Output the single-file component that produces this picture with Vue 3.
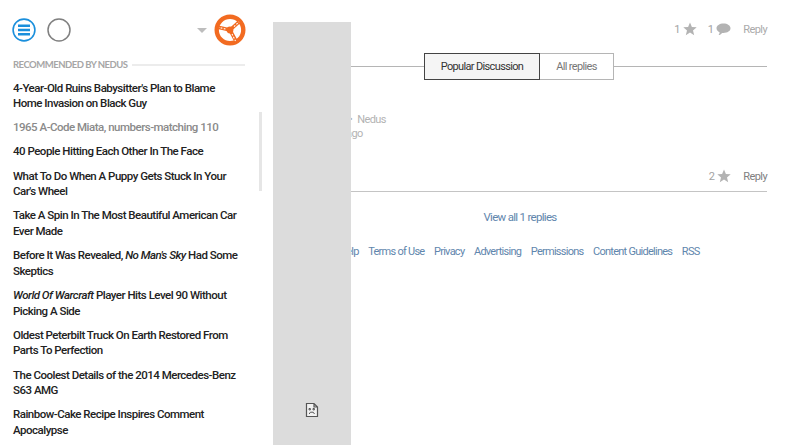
<script setup>
const items = [
  { parts: [{ t: "4-Year-Old Ruins Babysitter's Plan to Blame Home Invasion on Black Guy" }] },
  { parts: [{ t: '1965 A-Code Miata, numbers-matching 110' }], visited: true },
  { parts: [{ t: '40 People Hitting Each Other In The Face' }] },
  { parts: [{ t: "What To Do When A Puppy Gets Stuck In Your Car's Wheel" }] },
  { parts: [{ t: 'Take A Spin In The Most Beautiful American Car Ever Made' }] },
  { parts: [{ t: 'Before It Was Revealed, ' }, { t: "No Man's Sky", i: true }, { t: ' Had Some Skeptics' }] },
  { parts: [{ t: 'World Of Warcraft', i: true }, { t: ' Player Hits Level 90 Without Picking A Side' }] },
  { parts: [{ t: 'Oldest Peterbilt Truck On Earth Restored From Parts To Perfection' }] },
  { parts: [{ t: 'The Coolest Details of the 2014 Mercedes-Benz S63 AMG' }] },
  { parts: [{ t: 'Rainbow-Cake Recipe Inspires Comment Apocalypse' }] }
]
const footer = ['Help', 'Terms of Use', 'Privacy', 'Advertising', 'Permissions', 'Content Guidelines', 'RSS']
const star = 'M7 0.5 L8.9 5 L13.7 5.3 L10 8.4 L11.2 13.2 L7 10.6 L2.8 13.2 L4 8.4 L0.3 5.3 L5.1 5 Z'
</script>

<template>
  <div class="page">
    <aside class="sidebar">
      <header class="top">
        <svg class="ico" width="24" height="24" viewBox="0 0 24 24">
          <circle cx="12" cy="12" r="10.9" fill="none" stroke="#1a8fdc" stroke-width="1.6" />
          <path d="M6 7.8h12M6 12h12M6 16.2h12" stroke="#1a8fdc" stroke-width="2.4" />
        </svg>
        <svg class="ico" width="24" height="24" viewBox="0 0 24 24">
          <circle cx="12" cy="12" r="11" fill="#fff" stroke="#808080" stroke-width="1.5" />
        </svg>
        <span class="caret"></span>
        <svg class="wheel" width="32" height="32" viewBox="0 0 32 32">
          <circle cx="16" cy="16" r="13.3" fill="#fff" stroke="#f26b21" stroke-width="4.4" />
          <path d="M16 16L26 7M16 16L3 13M16 16L22.5 28" stroke="#f26b21" stroke-width="3.6" />
          <circle cx="16" cy="16" r="3.4" fill="#f26b21" />
          <path d="M20 12.6L25 8M11.5 15L5 13.5M18 20L21.5 27" stroke="#fff" stroke-width="1.1" stroke-dasharray="1.8 1.4" />
        </svg>
      </header>
      <div class="rec">
        <span>RECOMMENDED BY NEDUS</span>
        <i class="rec-line"></i>
      </div>
      <ul class="list">
        <li v-for="(item, n) in items" :key="n" :class="{ visited: item.visited }">
          <template v-for="(p, k) in item.parts" :key="k">
            <em v-if="p.i">{{ p.t }}</em>
            <template v-else>{{ p.t }}</template>
          </template>
        </li>
      </ul>
      <div class="thumb"></div>
    </aside>

    <main class="main">
      <div class="stats">
        <span>1</span>
        <svg width="14" height="14" viewBox="0 0 14 14"><path :d="star" fill="#b3b3b3" /></svg>
        <span class="count2">1</span>
        <svg width="15" height="13" viewBox="0 0 15 13"><path d="M7.5 0.5C11.4 0.5 14.5 2.6 14.5 5.3S11.4 10 7.5 10C7 10 6.6 10 6.1 9.9C5.2 11 3.9 11.8 2.6 12.1C3.2 11.3 3.6 10.4 3.6 9.3C1.7 8.5 0.5 7 0.5 5.3C0.5 2.6 3.6 0.5 7.5 0.5Z" fill="#b3b3b3" /></svg>
        <a class="reply light">Reply</a>
      </div>
      <div class="tabs">
        <i class="rule"></i>
        <button class="tab active">Popular Discussion</button>
        <button class="tab">All replies</button>
        <i class="rule end"></i>
      </div>
      <div class="meta">
        <span class="author">• <b>Nedus</b></span>
        <span class="ago">ago</span>
      </div>
      <div class="stats second">
        <span>2</span>
        <svg width="14" height="14" viewBox="0 0 14 14"><path :d="star" fill="#b3b3b3" /></svg>
        <a class="reply">Reply</a>
      </div>
      <a class="viewall">View all 1 replies</a>
      <nav class="foot">
        <a v-for="f in footer" :key="f">{{ f }}</a>
      </nav>
    </main>

    <div class="ghost">
      <svg width="14" height="16" viewBox="0 0 14 16">
        <path d="M1.5 1.5H9L12.5 5V14.5H1.5Z M9 1.5V5H12.5" fill="#f2f2f2" stroke="#555" stroke-width="1.2" />
        <path d="M4 6.5h1.4v1.4H4zM8 6.5h1.4v1.4H8zM4.2 12l1.2-1.8h2.8L9.5 12" fill="none" stroke="#555" stroke-width="1" />
      </svg>
    </div>
  </div>
</template>

<style>
html, body { margin: 0; background: #fff; overflow: hidden; }
</style>

<style scoped>
.page {
  position: relative;
  width: 800px;
  height: 445px;
  overflow: hidden;
  display: flex;
  font-family: Roboto, "Liberation Sans", sans-serif;
  background: #fff;
}
.sidebar {
  position: relative;
  width: 273px;
  flex: none;
  box-sizing: border-box;
  padding: 14px 28px 0 12px;
}
.top {
  display: flex;
  align-items: center;
  height: 32px;
}
.ico { margin-right: 11px; flex: none; }
.caret {
  margin-left: auto;
  margin-right: 7px;
  border-left: 5px solid transparent;
  border-right: 5px solid transparent;
  border-top: 5px solid #bdbdbd;
}
.wheel { flex: none; margin-right: -1px; }
.rec {
  display: flex;
  align-items: center;
  gap: 4px;
  margin-top: 12px;
  margin-left: 1px;
  font-family: Lato, "Liberation Sans", sans-serif;
  font-size: 9.5px;
  line-height: 14px;
  color: #a6a6a6;
  font-weight: 700;
  letter-spacing: -0.5px;
}
.rec-line { flex: 1; height: 2px; background: #ececec; }
.list {
  list-style: none;
  margin: 8.5px 0 0 1px;
  padding: 0 3px 0 0;
  display: flex;
  flex-direction: column;
  gap: 8.6px;
  font-size: 11.5px;
  line-height: 15.6px;
  font-weight: 500;
  letter-spacing: -0.5px;
  color: #222;
}
.visited { color: #8a8a8a; }
.thumb {
  position: absolute;
  left: 259px;
  top: 112px;
  width: 3px;
  height: 79px;
  background: #e6e6e6;
}
.main {
  flex: 1;
  box-sizing: border-box;
  padding: 21px 33px 0 0;
  min-width: 0;
  color: #999;
  font-size: 11px;
  letter-spacing: -0.6px;
}
.stats {
  display: flex;
  justify-content: flex-end;
  align-items: center;
  gap: 3px;
  height: 16px;
  color: #a3a3a3;
}
.count2 { margin-left: 8px; }
.reply { margin-left: 9px; color: #808080; }
.reply.light { color: #aaa; }
.tabs {
  display: flex;
  align-items: center;
  margin-top: 16px;
  height: 27px;
}
.rule { flex: 1; height: 1px; background: #b5b5b5; }
.rule.end { flex: none; width: 153px; }
.tab {
  box-sizing: border-box;
  height: 27px;
  margin: 0;
  padding: 0;
  width: 75px;
  margin-left: -1px;
  background: #fff;
  border: 1px solid #b5b5b5;
  color: #777;
  font: 400 11px Roboto, "Liberation Sans", sans-serif;
  letter-spacing: -0.65px;
}
.tab.active {
  position: relative;
  width: 116px;
  margin-left: 0;
  background: #f5f5f5;
  border-color: #444;
  color: #333;
}
.meta {
  display: flex;
  flex-direction: column;
  margin-top: 33px;
  padding-left: 78px;
  line-height: 14px;
  color: #b3b3b3;
}
.author { margin-left: -2px; }
.author b { font-weight: 400; margin-left: 3px; }
.ago { margin-left: -5px; }
.second { margin-top: 27px; padding-bottom: 7px; border-bottom: 1px solid #c4c4c4; }
.viewall {
  display: block;
  margin-top: 17px;
  text-align: center;
  color: #5f86ad;
  font-size: 11.5px;
  letter-spacing: -0.7px;
  line-height: 16px;
}
.foot {
  display: flex;
  gap: 9.6px;
  margin-top: 19px;
  padding-left: 66px;
  color: #5f86ad;
  font-size: 11px;
  letter-spacing: -0.74px;
  line-height: 16px;
}
.ghost {
  position: absolute;
  left: 273px;
  top: 22px;
  bottom: 0;
  width: 78px;
  background: #dcdcdc;
  display: flex;
  align-items: flex-end;
  justify-content: center;
  padding-bottom: 27px;
  box-sizing: border-box;
}
</style>
